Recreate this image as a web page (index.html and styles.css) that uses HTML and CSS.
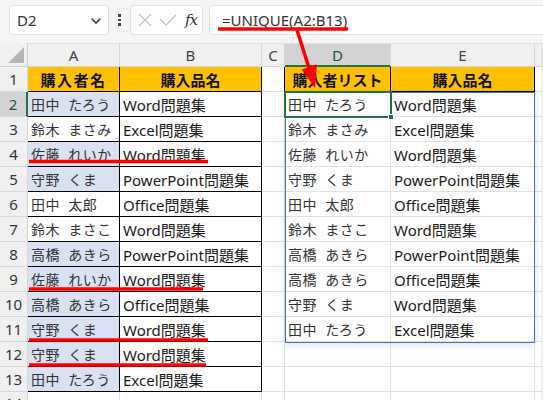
FILE: index.html
```html
<!DOCTYPE html>
<html lang="ja">
<head>
<meta charset="utf-8">
<link rel="stylesheet" href="styles.css">
</head>
<body>
<div class="page">
  <div class="toolbar">
    <div class="namebox"><span>D2</span>
      <svg class="chev" width="12" height="8" viewBox="0 0 12 8"><path d="M1.5 1.5 L6 6 L10.5 1.5" fill="none" stroke="#444" stroke-width="1.6"/></svg>
    </div>
    <div class="dots"><i></i><i></i><i></i></div>
    <div class="fxbox">
      <svg width="16" height="16" viewBox="0 0 16 16"><path d="M2 2 L14 14 M14 2 L2 14" stroke="#c4c4c4" stroke-width="1.3" fill="none"/></svg>
      <svg width="18" height="14" viewBox="0 0 18 14"><path d="M1 6 L7 12 L17 2" stroke="#c4c4c4" stroke-width="1.3" fill="none"/></svg>
      <span class="fx">fx</span>
    </div>
    <div class="formula">=UNIQUE(A2:B13)</div>
  </div>

  <div class="sheet">
    <div class="c corner"><svg width="18" height="18" viewBox="0 0 18 18"><path d="M17 1 L17 17 L1 17 Z" fill="#b5b5b5"/></svg></div>
    <div class="c ch">A</div><div class="c ch">B</div><div class="c ch">C</div><div class="c ch sel">D</div><div class="c ch">E</div><div class="c ch"></div>

    <div class="c rh">1</div><div class="c t hd wide">購入者名</div><div class="c t hd">購入品名</div><div class="c tl"></div><div class="c t hd">購入者リスト</div><div class="c t hd">購入品名</div><div class="c"></div>

    <div class="c rh rsel">2</div><div class="c t nm bl">田中 たろう</div><div class="c t bk">Word問題集</div><div class="c"></div><div class="c nm">田中 たろう</div><div class="c bk">Word問題集</div><div class="c"></div>
    <div class="c rh">3</div><div class="c t nm">鈴木 まさみ</div><div class="c t bk">Excel問題集</div><div class="c"></div><div class="c nm">鈴木 まさみ</div><div class="c bk">Excel問題集</div><div class="c"></div>
    <div class="c rh">4</div><div class="c t nm bl">佐藤 れいか</div><div class="c t bk">Word問題集</div><div class="c"></div><div class="c nm">佐藤 れいか</div><div class="c bk">Word問題集</div><div class="c"></div>
    <div class="c rh">5</div><div class="c t nm bl">守野 くま</div><div class="c t bk">PowerPoint問題集</div><div class="c"></div><div class="c nm">守野 くま</div><div class="c bk">PowerPoint問題集</div><div class="c"></div>
    <div class="c rh">6</div><div class="c t nm">田中 太郎</div><div class="c t bk">Office問題集</div><div class="c"></div><div class="c nm">田中 太郎</div><div class="c bk">Office問題集</div><div class="c"></div>
    <div class="c rh">7</div><div class="c t nm">鈴木 まさこ</div><div class="c t bk">Word問題集</div><div class="c"></div><div class="c nm">鈴木 まさこ</div><div class="c bk">Word問題集</div><div class="c"></div>
    <div class="c rh">8</div><div class="c t nm bl">高橋 あきら</div><div class="c t bk">PowerPoint問題集</div><div class="c"></div><div class="c nm">高橋 あきら</div><div class="c bk">PowerPoint問題集</div><div class="c"></div>
    <div class="c rh">9</div><div class="c t nm bl">佐藤 れいか</div><div class="c t bk">Word問題集</div><div class="c"></div><div class="c nm">高橋 あきら</div><div class="c bk">Office問題集</div><div class="c"></div>
    <div class="c rh">10</div><div class="c t nm bl">高橋 あきら</div><div class="c t bk">Office問題集</div><div class="c"></div><div class="c nm">守野 くま</div><div class="c bk">Word問題集</div><div class="c"></div>
    <div class="c rh">11</div><div class="c t nm bl">守野 くま</div><div class="c t bk">Word問題集</div><div class="c"></div><div class="c nm">田中 たろう</div><div class="c bk">Excel問題集</div><div class="c"></div>
    <div class="c rh">12</div><div class="c t nm bl">守野 くま</div><div class="c t bk">Word問題集</div><div class="c"></div><div class="c"></div><div class="c"></div><div class="c"></div>
    <div class="c rh">13</div><div class="c t nm bl">田中 たろう</div><div class="c t bk">Excel問題集</div><div class="c"></div><div class="c"></div><div class="c"></div><div class="c"></div>
    <div class="c rh last">14</div><div class="c"></div><div class="c"></div><div class="c"></div><div class="c"></div><div class="c"></div><div class="c"></div>

    <div class="spill"></div>
    <div class="cursor"><i></i></div>
  </div>

  <svg class="marks" width="543" height="400" viewBox="0 0 543 400">
    <g stroke="#f00" stroke-width="3.5" fill="none">
      <line x1="218" y1="29" x2="348" y2="29"/>
      <line x1="29" y1="161.5" x2="208" y2="161.5"/>
      <line x1="29" y1="289" x2="203" y2="289"/>
      <line x1="29" y1="340" x2="208" y2="340"/>
      <line x1="29" y1="365" x2="206" y2="365"/>
      <line x1="297" y1="30" x2="309" y2="68"/>
    </g>
    <polygon points="315,88 301.5,69.5 317,64.5" fill="#f00"/>
  </svg>
</div>
</body>
</html>
```

FILE: styles.css
```css
* { box-sizing: border-box; }
html, body { margin: 0; padding: 0; }
body {
  width: 543px;
  height: 400px;
  overflow: hidden;
  background: #fff;
  font-family: "Noto Sans", "Noto Sans CJK JP", sans-serif;
  color: #222;
}
.page { position: relative; width: 543px; height: 400px; overflow: hidden; }

.toolbar {
  height: 43px;
  background: #f5f5f5;
  display: flex;
  align-items: flex-start;
  padding: 5px 0 0 9px;
}
.namebox {
  width: 100px;
  height: 30px;
  background: #fff;
  border: 1px solid #e2e2e2;
  border-radius: 4px;
  display: flex;
  align-items: center;
  justify-content: space-between;
  padding: 0 6px 0 7px;
  font-size: 15px;
  color: #333;
}
.chev { margin-top: 1px; }
.dots {
  width: 21px;
  height: 30px;
  display: flex;
  flex-direction: column;
  align-items: center;
  justify-content: center;
  gap: 2px;
}
.dots i { width: 2.5px; height: 2.5px; background: #444; display: block; }
.fxbox {
  width: 73px;
  height: 30px;
  background: #fff;
  border: 1px solid #e2e2e2;
  border-radius: 4px;
  display: flex;
  align-items: center;
  gap: 6px;
  padding-left: 6px;
}
.fx {
  font-family: "DejaVu Serif", "Liberation Serif", serif;
  font-style: italic;
  font-size: 15px;
  color: #333;
  letter-spacing: -1px;
  margin-left: 2px;
}
.formula {
  flex: 1;
  margin-left: 6px;
  margin-right: -10px;
  height: 30px;
  background: #fff;
  border: 1px solid #e2e2e2;
  border-radius: 4px;
  padding-left: 12px;
  font-size: 15px;
  line-height: 28px;
  color: #333;
}

.sheet {
  position: relative;
  display: grid;
  grid-template-columns: 28px 92px 142px 23px 106px 144px 1fr;
  grid-template-rows: 24px repeat(14, 25px);
}
.c {
  border-right: 1px solid #e1e1e1;
  border-bottom: 1px solid #e1e1e1;
  display: flex;
  align-items: center;
  padding: 0 3px;
  white-space: nowrap;
  overflow: hidden;
}
.corner {
  background: #f0f0f0;
  border-color: #d0d0d0;
  justify-content: flex-end;
  align-items: flex-end;
  padding: 0 2px 2px 0;
}
.ch {
  background: #f0f0f0;
  border-color: #d6d6d6;
  border-top: 1px solid #e0e0e0;
  justify-content: center;
  font-size: 15px;
  color: #444;
}
.ch.sel {
  background: #d3d3d3;
  border-bottom: 2px solid #217346;
  color: #185c37;
}
.rh {
  background: #f0f0f0;
  border-color: #d6d6d6;
  justify-content: center;
  font-size: 15px;
  color: #333;
  padding: 0;
}
.rh.last { align-items: flex-start; padding-top: 1px; }
.rh.rsel {
  background: #d3d3d3;
  border-right: 2px solid #217346;
  color: #185c37;
}
.t { border-right-color: #000; border-bottom-color: #000; }
.tl { border-right-color: #000; }
.hd {
  background: #ffc000;
  justify-content: center;
  font-weight: bold;
  font-size: 15px;
  color: #111;
}
.hd.wide { letter-spacing: 1.5px; }
.nm { font-size: 14px; letter-spacing: 0.5px; word-spacing: 4px; color: #333; }
.bk { font-size: 15px; color: #1a1a1a; }
.bl { background: #d9e1f2; }

.spill {
  position: absolute;
  left: 285px;
  top: 49px;
  width: 250px;
  height: 251px;
  border: 1.5px solid #3a73d0;
  box-shadow: 0 2px 8px rgba(0,0,0,0.12);
  pointer-events: none;
}
.cursor {
  position: absolute;
  left: 284px;
  top: 48px;
  width: 108px;
  height: 27px;
  border: 2px solid #217346;
  pointer-events: none;
}
.cursor i {
  position: absolute;
  right: -4px;
  bottom: -4px;
  width: 6px;
  height: 6px;
  background: #217346;
  border: 1px solid #fff;
}

.marks { position: absolute; left: 0; top: 0; pointer-events: none; }
```
